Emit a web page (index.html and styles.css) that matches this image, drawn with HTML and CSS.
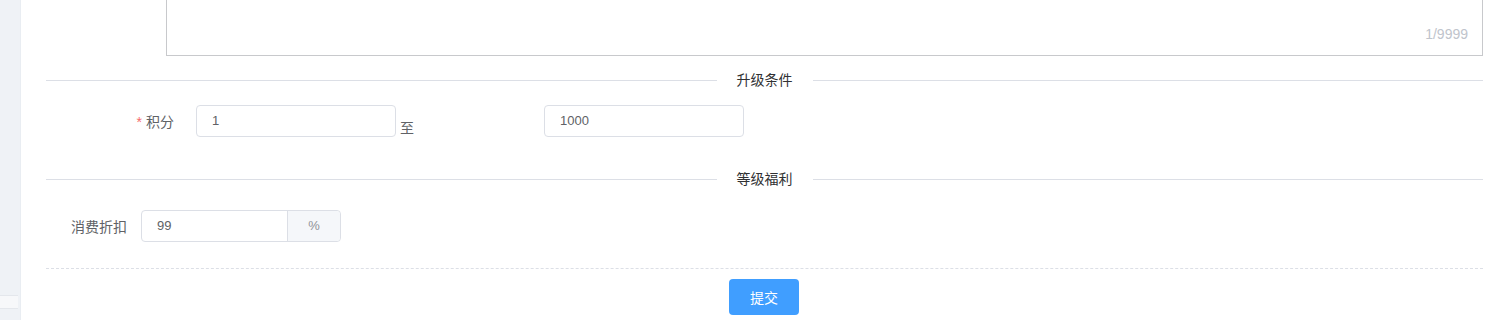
FILE: index.html
```html
<!DOCTYPE html>
<html lang="zh-CN">
<head>
  <meta charset="UTF-8" />
  <meta name="viewport" content="width=device-width, initial-scale=1.0"/>
  <title>会员等级</title>
  <link rel="stylesheet" href="styles.css">
</head>
<body>
  <div class="layout">
    <aside class="sidebar">
      <div class="sidebar-item"></div>
    </aside>

    <main class="main">
      <div class="remark-row">
        <div class="textarea-box">
          <span class="count">1/9999</span>
        </div>
      </div>

      <div class="divider divider-first"><span>升级条件</span></div>

      <div class="form-row row-points">
        <label class="form-label label-points"><span class="required">*</span>积分</label>
        <div class="input">1</div>
        <span class="range-sep">至</span>
        <div class="input input-max">1000</div>
      </div>

      <div class="divider divider-second"><span>等级福利</span></div>

      <div class="form-row row-discount">
        <label class="form-label label-discount">消费折扣</label>
        <div class="input-group">
          <div class="input-inner">99</div>
          <div class="input-append">%</div>
        </div>
      </div>

      <div class="form-footer">
        <button class="btn-primary">提交</button>
      </div>
    </main>
  </div>
</body>
</html>
```

FILE: styles.css
```css
body {
  margin: 0;
  font-family: "Liberation Sans", "Noto Sans CJK SC", sans-serif;
  color: #606266;
  background: #fff;
}

.layout {
  display: flex;
  height: 320px;
  overflow: hidden;
}

.sidebar {
  width: 20px;
  flex-shrink: 0;
  background: #eff2f6;
  border-right: 1px solid #e9edf2;
  display: flex;
  flex-direction: column;
}

.sidebar-item {
  margin-top: 295px;
  height: 14px;
  width: 18px;
  background: #f7f8fa;
  border-top: 1px solid #e4e7ec;
  border-bottom: 1px solid #e4e7ec;
  box-sizing: border-box;
}

.main {
  flex: 1;
  padding: 0 15px 0 25px;
}

.remark-row {
  padding-left: 120px;
}

.textarea-box {
  position: relative;
  height: 56px;
  box-sizing: border-box;
  border: 1px solid #c8c9cc;
  border-top: none;
}

.count {
  position: absolute;
  right: 14px;
  bottom: 13px;
  font-size: 14px;
  color: #c0c4cc;
}

.divider {
  display: flex;
  align-items: center;
  height: 20px;
  font-size: 14px;
  color: #303133;
}

.divider::before,
.divider::after {
  content: "";
  flex: 1;
  height: 1px;
  background: #dcdfe6;
}

.divider span {
  padding: 0 20px;
  line-height: 20px;
}

.divider-first {
  margin-top: 14px;
}

.divider-second {
  margin-top: 32px;
}

.form-row {
  display: flex;
  align-items: center;
  height: 32px;
}

.row-points {
  margin-top: 15px;
}

.row-discount {
  margin-top: 21px;
}

.form-label {
  box-sizing: border-box;
  text-align: right;
  font-size: 14px;
  color: #606266;
}

.label-points {
  width: 150px;
  padding-right: 22px;
}

.label-discount {
  width: 95px;
  padding-right: 14px;
}

.required {
  color: #f56c6c;
  margin-right: 4px;
}

.input {
  width: 200px;
  height: 32px;
  box-sizing: border-box;
  border: 1px solid #dcdfe6;
  border-radius: 4px;
  padding: 0 15px;
  line-height: 30px;
  font-size: 13px;
  color: #606266;
}

.range-sep {
  align-self: flex-end;
  margin-left: 4px;
  font-size: 14px;
  line-height: 18px;
  color: #606266;
}

.input-max {
  margin-left: 130px;
}

.input-group {
  display: flex;
  width: 200px;
  height: 32px;
  box-sizing: border-box;
  border: 1px solid #dcdfe6;
  border-radius: 4px;
  font-size: 13px;
}

.input-inner {
  flex: 1;
  padding: 0 15px;
  line-height: 30px;
}

.input-append {
  width: 53px;
  box-sizing: border-box;
  border-left: 1px solid #dcdfe6;
  background: #f5f7fa;
  border-radius: 0 4px 4px 0;
  text-align: center;
  line-height: 30px;
  color: #909399;
}

.form-footer {
  margin-top: 26px;
  border-top: 1px dashed #dcdfe6;
  padding-top: 10px;
  display: flex;
  justify-content: center;
}

.btn-primary {
  width: 70px;
  height: 36px;
  margin-right: 1px;
  border: none;
  border-radius: 4px;
  background: #409eff;
  color: #fff;
  font-family: "Liberation Sans", "Noto Sans CJK SC", sans-serif;
  font-size: 14px;
  cursor: pointer;
}

.btn-primary:hover {
  background: #66b1ff;
}
```
